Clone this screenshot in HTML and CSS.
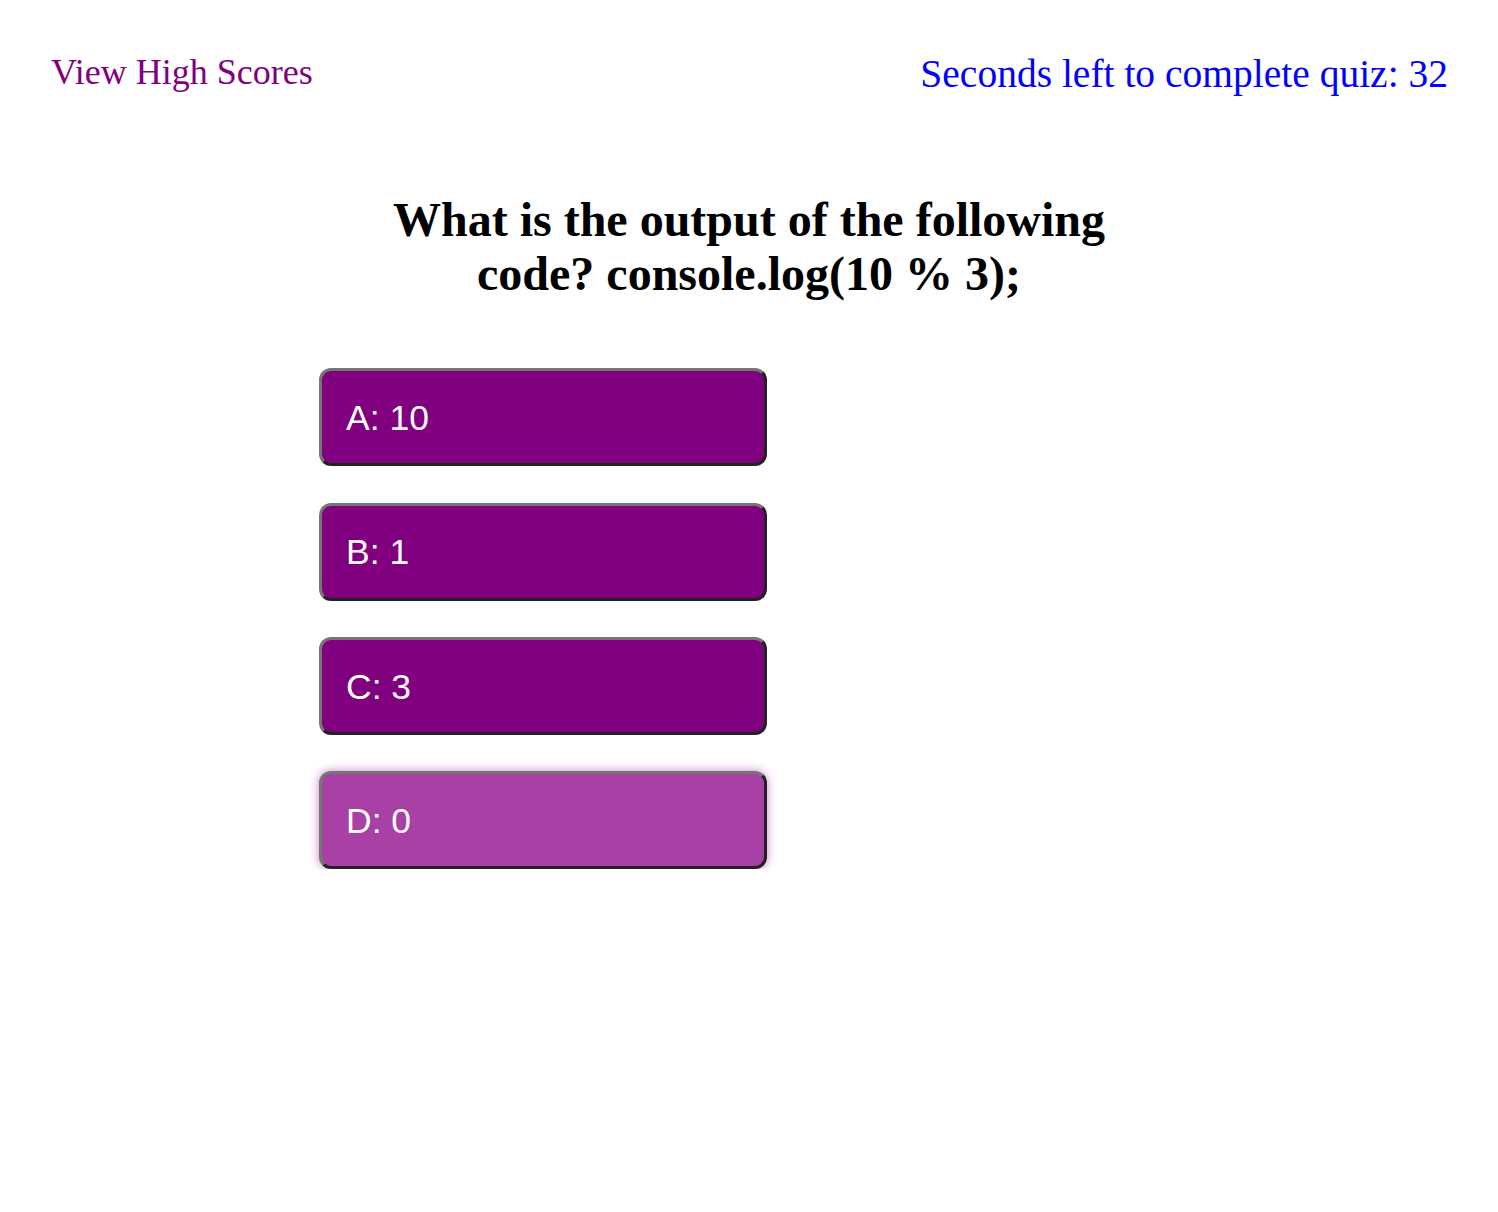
FILE: index.html
```html
<!DOCTYPE html>
<html>
<head>
<meta charset="utf-8">
<link rel="stylesheet" href="styles.css">
</head>
<body>
<header class="top-bar">
  <a class="high-scores" href="#">View High Scores</a>
  <div class="timer">Seconds left to complete quiz: 32</div>
</header>
<main class="quiz">
  <h1 class="question">What is the output of the following code? console.log(10 % 3);</h1>
  <div class="answers">
    <button class="answer">A: 10</button>
    <button class="answer">B: 1</button>
    <button class="answer">C: 3</button>
    <button class="answer answer-hover">D: 0</button>
  </div>
</main>
</body>
</html>
```
FILE: styles.css
```css
html, body {
  margin: 0;
  padding: 0;
  background: #ffffff;
  font-family: "Liberation Serif", "Times New Roman", serif;
}

.top-bar {
  display: flex;
  justify-content: space-between;
  align-items: flex-start;
  padding: 52px 50px 0 51px;
}

.high-scores {
  color: #800080;
  font-size: 36px;
  text-decoration: none;
  line-height: 1.15;
}

.timer {
  color: #0000ff;
  font-size: 39.5px;
  line-height: 1.15;
}

.quiz {
  display: flex;
  flex-direction: column;
}

.question {
  width: 750px;
  margin: 96px auto 0;
  text-align: center;
  font-size: 48px;
  font-weight: bold;
  line-height: 54px;
  color: #000;
}

.answers {
  display: flex;
  flex-direction: column;
  gap: 36.3px;
  margin: 67px 0 0 319px;
}

.answer {
  width: 448px;
  height: 98px;
  box-sizing: border-box;
  padding: 2px 24px 0;
  text-align: left;
  font-family: "Liberation Sans", Arial, sans-serif;
  font-size: 35.5px;
  color: #ffffff;
  background: #800080;
  border: 3px solid;
  border-color: #767676 #222222 #222222 #767676;
  border-radius: 12px;
  cursor: pointer;
}

.answer-hover {
  background: #a840a5;
  box-shadow: 0 0 10px rgba(160, 40, 160, 0.6);
}
```
